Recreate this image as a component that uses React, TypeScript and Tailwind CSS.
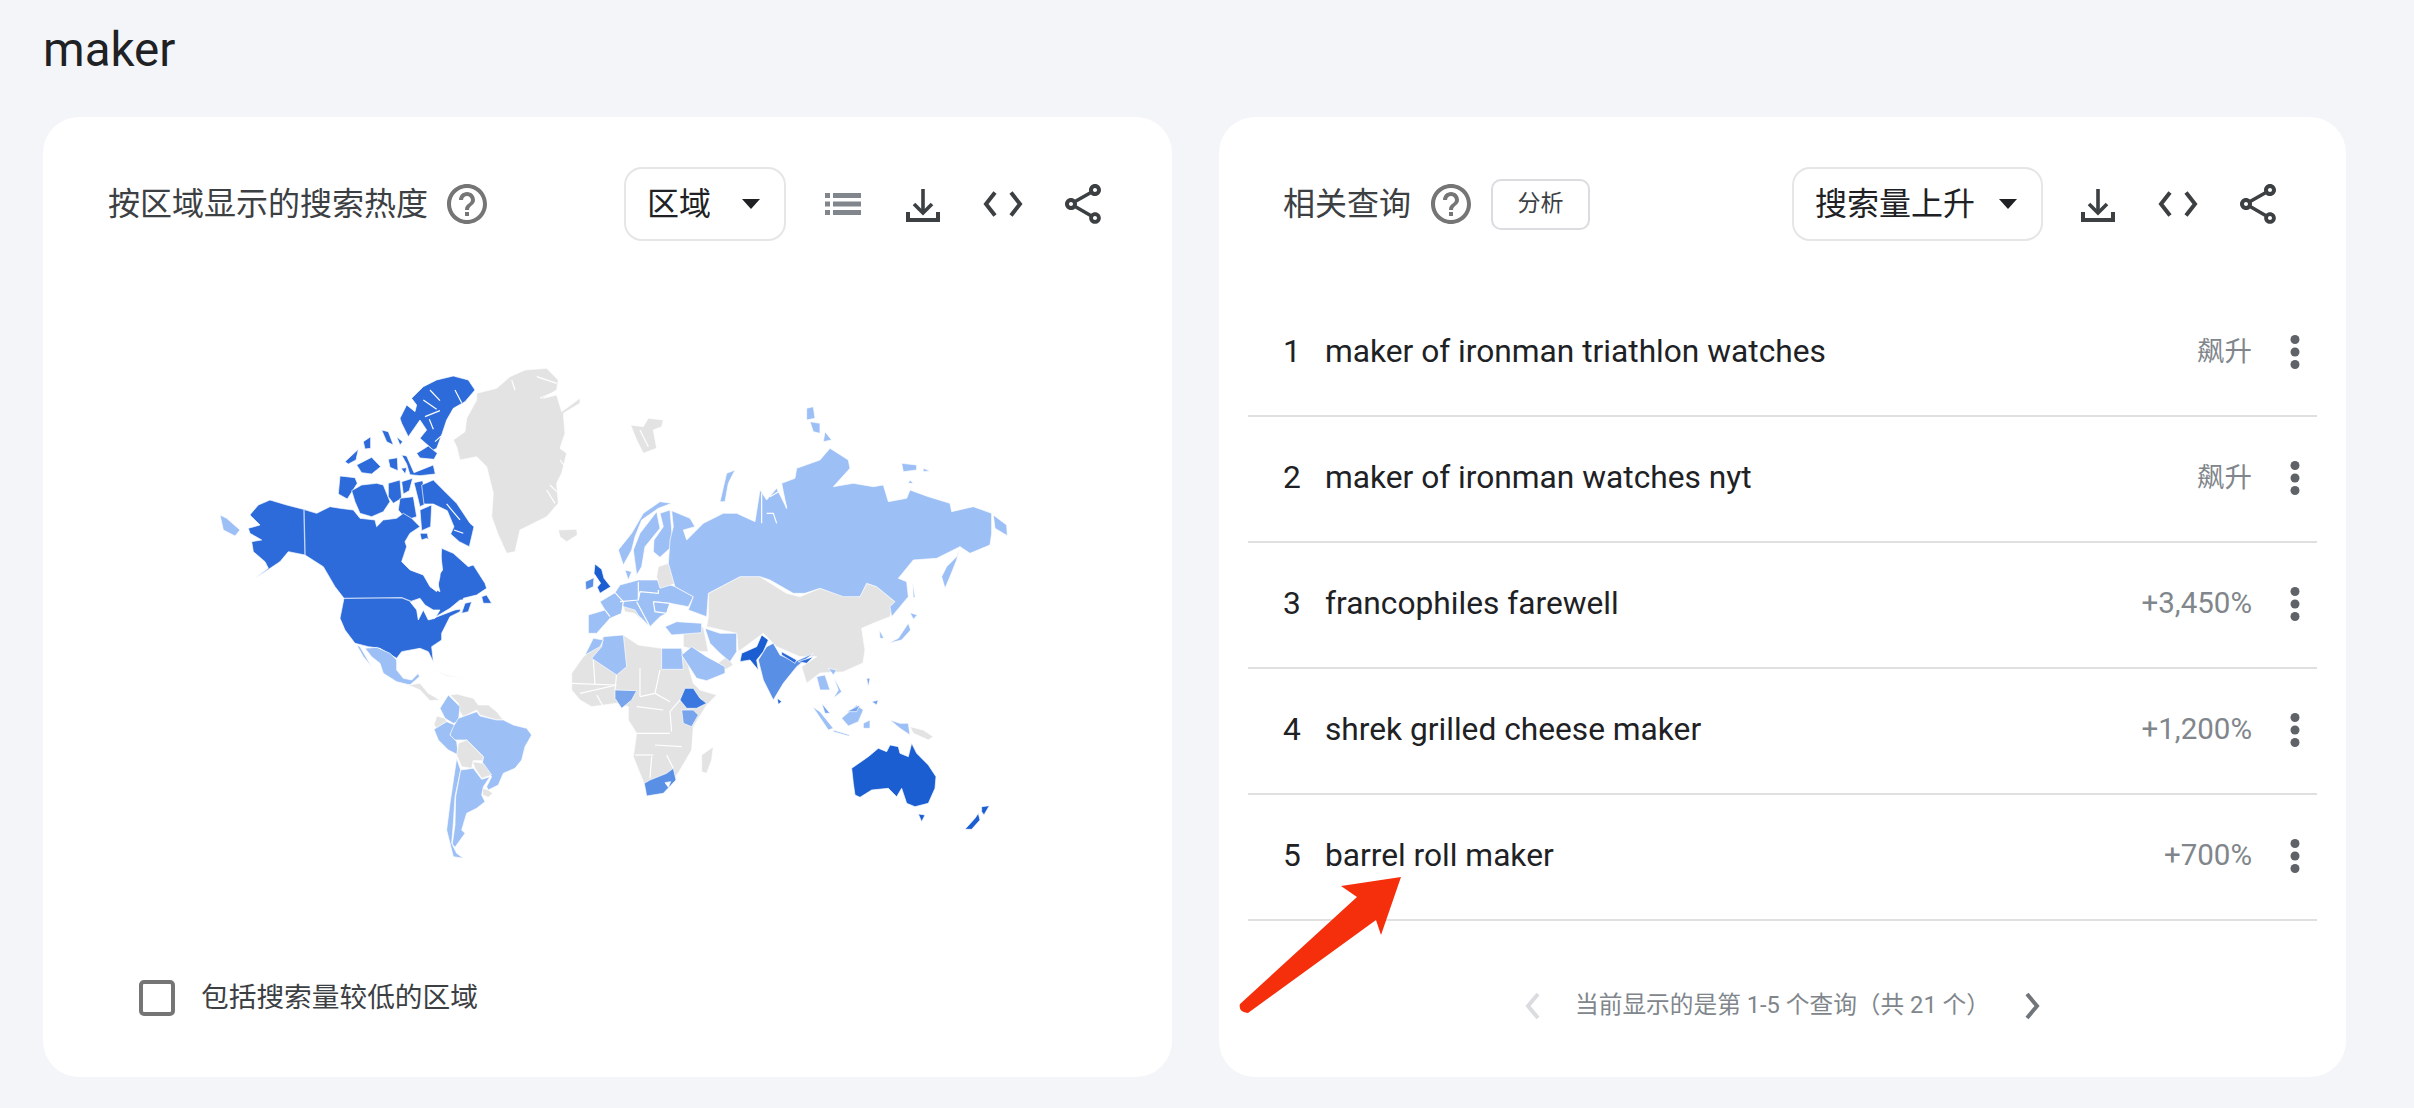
const FONT = "font-['Roboto','Noto_Sans_CJK_SC',sans-serif]"

const DARK = '#2c6bd9'
const DEEP = '#1b5ed2'
const ETHIOPIA = '#3a78df'
const MID = '#5a8fe6'
const SOFT = '#78a4ec'
const LIGHT = '#9cbff5'
const GRAY = '#e3e3e3'
const WHITE = '#ffffff'

type Sheet = {
  x: number
  y: number
  shapes: [string, string][]
  lines?: string[]
}

// each sheet is traced at 3x, x/y is where it sits on the page
const sheets: Sheet[] = [
  {
    x: 440,
    y: 360,
    shapes: [
      [GRAY, '40,240 75,215 80,175 110,120 110,100 170,85 210,50 255,30 320,25 355,60 350,90 310,115 350,105 365,155 420,115 420,130 370,160 375,220 360,265 380,280 365,340 350,370 355,430 320,470 240,510 225,575 200,580 175,525 155,470 160,400 140,320 110,290 60,300 50,260'],
      [GRAY, '355,510 410,508 412,525 380,545 360,530'],
      [GRAY, '572,195 610,200 625,175 670,180 665,200 640,210 650,265 610,280 590,240'],
    ],
    lines: ['290,50 350,70', '215,60 225,90', '300,115 345,95', '320,390 345,430', '360,300 375,320', '330,375 350,395', '600,210 625,260'],
  },
  {
    x: 220,
    y: 370,
    shapes: [
      [DARK, '575,85 610,50 650,30 700,18 745,30 765,60 735,95 700,115 680,150 665,195 650,235 640,240 600,205 620,180 600,150 565,200 545,160 540,145 560,105 585,125 590,105'],
      [DARK, '485,180 505,185 520,225 500,215'],
      [DARK, '530,200 548,215 540,225'],
      [DARK, '375,275 415,238 408,270 385,282'],
      [DARK, '430,215 452,200 452,235 435,237'],
      [DARK, '410,285 455,262 482,290 455,312 425,308'],
      [DARK, '505,268 532,263 534,302 510,292'],
      [DARK, '545,255 560,258 582,308 640,285 646,312 600,317 570,314 560,282'],
      [DARK, '543,295 560,293 556,312'],
      [DARK, '590,250 625,228 652,250 642,268 600,264'],
      [DARK, '360,318 405,323 412,340 382,387 355,372'],
      [DARK, '395,362 425,345 470,340 490,345 510,395 490,425 455,440 420,430 405,395'],
      [DARK, '505,340 540,330 545,385 520,400 505,380'],
      [DARK, '545,335 578,325 568,362 550,372'],
      [DARK, '540,385 580,380 590,440 560,450 535,420'],
      [DARK, '582,338 608,332 620,400 600,410'],
      [DARK, '605,345 640,330 675,365 710,400 750,460 762,470 748,530 718,515 692,492 702,470 682,422 640,402 612,402'],
      [DARK, '600,420 635,405 632,470 605,482'],
      [DARK, '600,490 622,490 627,517 605,512'],
      [DARK, '92,432 115,405 150,390 200,405 250,418 290,430 330,410 360,415 400,420 420,445 465,450 470,470 490,450 530,445 550,430 575,445 600,470 570,490 555,515 560,530 545,575 570,600 610,615 630,650 650,665 660,620 665,535 700,550 745,590 760,585 795,640 800,655 770,675 730,685 720,725 690,740 665,790 665,810 635,830 640,875 625,845 600,835 545,845 530,865 505,850 480,835 445,830 405,820 375,780 360,745 372,685 345,650 310,590 255,555 205,545 180,575 135,605 105,625 145,595 135,575 100,545 95,515 125,510 90,490 85,475 120,465 90,435'],
      [WHITE, '548,575 565,530 590,515 620,505 660,535 668,600 650,625 660,665 640,655 630,620 575,600'],
      [WHITE, '570,695 600,685 615,705 640,720 660,720 645,745 625,750 610,720 595,750 590,720'],
      [WHITE, '640,745 690,715 720,690 745,690 740,715 705,720'],
      [DARK, '785,680 800,675 815,700 790,700'],
      [DARK, '735,700 755,695 745,725 725,730'],
      [LIGHT, '0,435 20,445 60,480 45,498 10,480'],
    ],
    lines: ['610,90 650,118', '630,60 660,92', '615,140 660,122', '628,148 640,178', '705,60 725,98', '645,215 665,197', '680,402 720,450', '702,480 730,490', '300,590 345,670'],
  },
  {
    x: 340,
    y: 640,
    shapes: [
      [LIGHT, '75,25 110,22 150,40 170,60 170,90 190,115 215,120 235,100 238,110 210,135 170,125 130,100 120,70 95,50'],
      [LIGHT, '50,15 60,20 95,80 70,50'],
      [GRAY, '205,135 240,130 265,160 300,180 270,182 240,150'],
      [GRAY, '270,85 320,105 375,115 320,108'],
      [GRAY, '330,165 350,162 400,175 415,195 445,195 470,215 490,240 470,240 420,225 410,210 370,230 360,215 355,190'],
      [LIGHT, '325,165 360,200 355,245 340,250 315,235 300,205'],
      [GRAY, '290,228 315,235 320,245 290,265 282,255'],
      [LIGHT, '282,268 320,245 345,255 330,285 350,305 355,345 325,330 295,300'],
      [LIGHT, '355,235 410,215 420,228 470,240 490,240 520,255 560,265 575,285 555,320 545,360 525,385 490,400 475,435 445,450 440,440 455,410 425,385 430,350 380,300 345,300 330,285 340,260'],
      [GRAY, '355,310 380,300 430,350 428,362 400,362 395,385 365,380 350,345'],
      [GRAY, '398,365 430,370 455,405 425,415 405,385'],
      [GRAY, '428,445 445,450 458,460 445,472 428,465'],
      [LIGHT, '350,355 362,390 345,470 340,550 335,610 350,640 370,655 340,650 320,570 330,490'],
      [LIGHT, '362,390 400,385 425,418 450,410 430,440 425,465 435,485 410,505 380,520 365,570 375,580 345,622 337,612 345,555 347,470'],
    ],
  },
  {
    x: 560,
    y: 640,
    shapes: [
      [GRAY, '70,50 100,25 130,-10 190,-15 235,15 305,25 365,25 380,60 400,130 420,150 470,165 440,195 400,260 395,330 360,390 340,420 310,460 260,468 250,425 220,350 230,280 205,240 205,200 170,190 95,200 60,180 35,150 35,100'],
      [SOFT, '165,150 230,152 215,180 185,205 165,175'],
      [LIGHT, '305,25 365,25 370,88 305,88'],
      [ETHIOPIA, '375,145 400,145 420,175 440,190 410,205 380,205 360,180'],
      [SOFT, '365,210 400,210 415,225 395,260 370,250'],
      [MID, '253,430 270,420 320,400 340,385 348,420 310,460 260,468'],
      [WHITE, '315,428 332,425 325,442'],
      [GRAY, '425,395 425,345 460,320 455,360 440,400'],
    ],
    lines: ['100,60 105,135', '35,130 165,135', '170,100 165,150', '240,85 240,170', '300,90 285,160 330,185', '230,200 310,210', '360,180 330,215 335,275', '220,280 330,280', '225,345 280,345', '285,315 365,320', '275,350 270,415', '320,345 340,385', '285,160 240,170', '60,160 170,135', '110,165 130,200'],
  },
  {
    x: 560,
    y: 470,
    shapes: [
      [GRAY, '445,370 540,320 600,320 680,370 720,380 780,355 850,375 900,380 920,340 950,350 1005,395 990,440 940,460 905,475 915,540 909,579 849,606 780,609 740,640 725,590 770,560 720,560 650,530 610,490 535,545 530,490 440,470 445,440'],
      [GRAY, '370,490 430,470 445,545 425,545 370,530'],
      [GRAY, '420,630 470,620 495,600 520,585 500,560 480,575 440,600'],
      [LIGHT, '130,500 190,495 200,590 170,615 95,565 125,530'],
      [LIGHT, '75,555 100,505 130,510 120,530'],
      [LIGHT, '365,555 395,530 440,560 495,590 495,610 440,632 410,625'],
      [LIGHT, '435,475 480,490 530,490 530,545 510,575 480,550 450,520'],
      [LIGHT, '315,470 350,455 425,460 425,488 335,495'],
      [DEEP, '540,575 545,550 590,530 605,495 625,510 610,545 590,570 595,600 570,570'],
      [MID, '595,570 620,530 640,520 660,555 705,575 760,550 710,590 670,640 640,690 610,630 600,590'],
      [DEEP, '652,685 665,695 655,703'],
      [DARK, '665,545 710,570 705,580 665,555'],
      [DARK, '715,575 760,560 740,580'],
      // mainland europe sits on one base so only thin borders show between countries
      [LIGHT, '120,395 165,368 180,345 235,330 290,330 345,350 400,380 385,410 330,400 320,430 300,440 270,470 240,440 190,410 185,430 150,445 110,490 85,490 85,435 135,420'],
      [DEEP, '105,282 125,298 132,325 152,350 120,370 112,352 122,340 102,310'],
      [MID, '76,335 102,323 100,350 78,360'],
      [LIGHT, '175,240 215,190 250,130 300,95 335,100 295,115 245,150 225,200 215,240 190,285'],
      [LIGHT, '220,240 240,190 290,125 300,175 255,230 245,290 230,315'],
      [LIGHT, '300,130 330,120 335,180 340,225 300,262 280,245 282,210 310,170'],
      [GRAY, '190,410 225,420 250,460 225,430 195,425'],
      [GRAY, '295,290 325,280 350,340 300,355 290,320'],
      [LIGHT, '195,300 215,305 205,330'],
      [LIGHT, '480,95 500,10 525,0 505,40 495,95'],
    ],
    lines: ['180,395 235,390 240,365 295,370 295,360', '165,368 190,395 185,430', '150,440 135,420', '235,335 235,390', '280,395 330,400 320,430 285,425 280,395', '230,395 270,470'],
  },
  {
    x: 760,
    y: 390,
    shapes: [
      [LIGHT, '-265,362 -210,385 -195,410 -230,420 -220,450 -170,400 -110,370 -70,370 -15,395 0,300 20,330 50,295 80,355 65,280 105,265 110,235 180,210 210,175 265,210 270,235 220,290 280,280 340,290 370,285 385,335 440,325 450,300 505,320 570,340 575,365 640,350 695,370 695,430 690,465 630,490 600,470 530,505 460,510 415,565 440,575 445,620 395,680 390,650 405,635 350,590 320,580 300,620 250,620 180,595 135,610 100,610 30,570 0,560 -60,560 -155,610 -160,680 -215,660 -200,620 -255,590 -275,520 -270,450 -260,410'],
      [LIGHT, '140,55 160,50 165,85 140,90'],
      [LIGHT, '150,95 180,100 180,130 160,125'],
      [LIGHT, '195,125 215,150 190,155'],
      [LIGHT, '425,220 470,225 470,240 430,245'],
      [LIGHT, '490,235 510,243 490,245'],
      [LIGHT, '450,270 460,280 445,280'],
      [LIGHT, '700,375 740,405 742,437 705,415'],
      [LIGHT, '600,470 590,510 570,560 555,595 545,560 560,530 590,500'],
      [LIGHT, '458,575 465,620 460,625'],
      [LIGHT, '450,668 472,675 460,688'],
      [LIGHT, '445,700 452,720 425,750 385,760 415,745'],
      [LIGHT, '358,720 372,745 360,745'],
    ],
    lines: ['5,310 5,400', '20,370 40,370 50,400', '30,320 65,300 80,355'],
  },
  {
    x: 800,
    y: 640,
    shapes: [
      [LIGHT, '50,110 75,105 90,150 60,150'],
      [LIGHT, '85,85 110,90 100,105'],
      [LIGHT, '100,110 125,155 100,175 115,150'],
      [LIGHT, '38,200 60,215 100,265 85,270'],
      [SOFT, '65,190 90,220 75,220'],
      [LIGHT, '125,235 170,195 190,210 175,245 145,258'],
      [SOFT, '140,215 180,195 170,215'],
      [LIGHT, '100,270 150,285 145,288 100,275'],
      [LIGHT, '190,250 210,240 210,265 190,265'],
      [SOFT, '200,115 210,115 205,140'],
      [SOFT, '215,185 235,180 230,195'],
      [LIGHT, '270,240 300,250 325,250 330,285 300,265'],
      [GRAY, '330,260 370,270 400,290 385,300 340,280'],
      [DEEP, '155,385 205,350 235,325 260,335 270,315 295,320 300,340 325,350 335,310 350,340 385,375 408,410 405,445 385,490 345,500 320,490 305,445 290,470 265,445 215,450 180,472 165,465 160,430'],
      [DEEP, '355,522 375,525 365,545'],
      [DEEP, '495,568 525,535 535,520 540,540 515,568'],
      [DEEP, '545,500 568,497 552,525 545,515'],
    ],
  },
]

function WorldMap() {
  return (
    <svg viewBox="190 340 860 540" className="block h-[540px] w-[860px]">
      {sheets.map((sheet) => (
        <g key={`${sheet.x}-${sheet.y}`} transform={`translate(${sheet.x} ${sheet.y}) scale(0.3333)`}>
          {sheet.shapes.map(([fill, points]) => (
            <polygon key={points} fill={fill} points={points} stroke="#fff" strokeWidth="2" strokeLinejoin="round" />
          ))}
          {sheet.lines?.map((points) => (
            <polyline key={points} fill="none" stroke="#fff" strokeWidth="3.5" points={points} />
          ))}
        </g>
      ))}
      {/* alaska and 49th parallel borders are paler than the coast */}
      <g transform="translate(220 370) scale(0.3333)" fill="none" stroke="#c3d6f6" strokeWidth="4">
        <path d="M252 420L255 555" />
        <path d="M372 685L545 683L575 695" />
      </g>
    </svg>
  )
}

function Help() {
  return (
    <svg viewBox="0 0 24 24" className="size-12 fill-[#757575]">
      <path d="M11 18h2v-2h-2v2zm1-16C6.48 2 2 6.48 2 12s4.48 10 10 10 10-4.48 10-10S17.52 2 12 2zm0 18c-4.41 0-8-3.59-8-8s3.59-8 8-8 8 3.59 8 8-3.59 8-8 8zm0-14c-2.21 0-4 1.79-4 4h2c0-1.1.9-2 2-2s2 .9 2 2c0 2-3 1.75-3 5h2c0-2.25 3-2.5 3-5 0-2.21-1.79-4-4-4z" />
    </svg>
  )
}

function ListIcon() {
  return (
    <svg viewBox="0 0 48 48" className="size-12 fill-[#80868b]">
      <rect x="6" y="13" width="5" height="5" />
      <rect x="6" y="21.5" width="5" height="5" />
      <rect x="6" y="30" width="5" height="5" />
      <rect x="14" y="13" width="28" height="5" />
      <rect x="14" y="21.5" width="28" height="5" />
      <rect x="14" y="30" width="28" height="5" />
    </svg>
  )
}

function DownloadIcon() {
  return (
    <svg viewBox="0 0 48 48" fill="none" className="size-12 stroke-[#3c4043]" strokeWidth="3.6">
      <path d="M24 9V32" />
      <path d="M15 24l9 9 9-9" />
      <path d="M9 32v8h30v-8" strokeWidth="4" />
    </svg>
  )
}

function CodeIcon() {
  return (
    <svg viewBox="0 0 48 48" fill="none" className="size-12 stroke-[#3c4043]" strokeWidth="4">
      <path d="M16 12.5L7 24l9 11.5" />
      <path d="M32 12.5L41 24l-9 11.5" />
    </svg>
  )
}

function ShareIcon() {
  return (
    <svg viewBox="0 0 24 24" className="size-12 fill-[#3c4043]">
      <path d="M18 16.08c-.76 0-1.44.3-1.96.77L8.91 12.7c.05-.23.09-.46.09-.7s-.04-.47-.09-.7l7.05-4.11c.54.5 1.25.81 2.04.81 1.66 0 3-1.34 3-3s-1.34-3-3-3-3 1.34-3 3c0 .24.04.47.09.7L8.04 9.81C7.5 9.31 6.79 9 6 9c-1.66 0-3 1.34-3 3s1.34 3 3 3c.79 0 1.5-.31 2.04-.81l7.12 4.16c-.05.21-.08.43-.08.65 0 1.61 1.31 2.92 2.92 2.92 1.61 0 2.92-1.31 2.92-2.92s-1.31-2.92-2.92-2.92zM18 4c.55 0 1 .45 1 1s-.45 1-1 1-1-.45-1-1 .45-1 1-1zM6 13c-.55 0-1-.45-1-1s.45-1 1-1 1 .45 1 1-.45 1-1 1zm12 7.02c-.55 0-1-.45-1-1s.45-1 1-1 1 .45 1 1-.45 1-1 1z" />
    </svg>
  )
}

function Kebab() {
  return (
    <svg viewBox="0 0 12 36" className="h-9 w-3 fill-[#5f6368]">
      <circle cx="6" cy="5.5" r="4.5" />
      <circle cx="6" cy="18" r="4.5" />
      <circle cx="6" cy="30.5" r="4.5" />
    </svg>
  )
}

function Select({ label, className }: { label: string; className: string }) {
  return (
    <div className={`flex h-[74px] items-center justify-between rounded-[18px] border-2 border-[#e6e6e6] pl-[21px] pr-[24px] text-[32px] text-[#202124] ${className}`}>
      <span>{label}</span>
      <svg viewBox="0 0 18 10" className="h-2.5 w-[18px] fill-[#202124]">
        <path d="M0 0h18L9 10z" />
      </svg>
    </div>
  )
}

const queries = [
  ['maker of ironman triathlon watches', '飙升', 'text-[27.5px]'],
  ['maker of ironman watches nyt', '飙升', 'text-[27.5px]'],
  ['francophiles farewell', '+3,450%', 'text-[29.5px]'],
  ['shrek grilled cheese maker', '+1,200%', 'text-[29.5px]'],
  ['barrel roll maker', '+700%', 'text-[29.5px]'],
]

export default function App() {
  return (
    <div className={`relative h-[1108px] w-[2414px] overflow-hidden bg-[#f4f5f9] pl-[43px] ${FONT}`}>
      <h1 className="h-[117px] pt-[22px] text-[47.5px] leading-[56px] font-normal text-[#202124]">maker</h1>
      <div className="flex gap-[47px]">
        <section className="flex h-[960px] w-[1129px] flex-col rounded-[36px] bg-white">
          <header className="mt-[50px] flex items-center pl-[65px]">
            <h2 className="w-[335px] text-[32px] font-normal whitespace-nowrap text-[#3c4043]">按区域显示的搜索热度</h2>
            <Help />
            <Select label="区域" className="ml-[133px] w-[162px]" />
            <div className="ml-[33px] flex gap-8">
              <ListIcon />
              <DownloadIcon />
              <CodeIcon />
              <ShareIcon />
            </div>
          </header>
          <div className="mt-[99px] ml-[147px]">
            <WorldMap />
          </div>
          <label className="mt-[97px] ml-[96px] flex items-center gap-[26px] text-[27.7px] text-[#3c4043]">
            <span className="size-9 rounded-[5px] border-4 border-[#757575]" />
            包括搜索量较低的区域
          </label>
        </section>

        <section className="flex h-[960px] w-[1127px] flex-col rounded-[36px] bg-white px-[29px]">
          <header className="mt-[50px] flex items-center pl-[35px]">
            <h2 className="w-[126px] text-[32px] font-normal whitespace-nowrap text-[#3c4043]">相关查询</h2>
            <div className="ml-[18px]">
              <Help />
            </div>
            <button className="ml-4 h-[51px] w-[99px] rounded-[10px] border-2 border-[#dadce0] text-[23px] text-[#3c4043]">分析</button>
            <Select label="搜索量上升" className="ml-[202px] w-[251px]" />
            <div className="ml-[31px] flex gap-8">
              <DownloadIcon />
              <CodeIcon />
              <ShareIcon />
            </div>
          </header>
          <ol className="mt-[50px]">
            {queries.map(([name, value, size], i) => (
              <li key={name} className="flex h-[126px] items-center border-b-2 border-[#e0e0e0] pb-[3px] pl-[35px] text-[31.7px] text-[#202124]">
                <span className="w-[42px]">{i + 1}</span>
                <span className="flex-1">{name}</span>
                <span className={`text-[#80868b] ${size}`}>{value}</span>
                <span className="mr-4 ml-[37px] flex">
                  <Kebab />
                </span>
              </li>
            ))}
          </ol>
          <footer className="mt-[67px] flex items-center justify-center gap-[30px] text-[23.7px] text-[#80868b]">
            <svg viewBox="0 0 24 36" fill="none" className="h-9 w-6 stroke-[#dadce0]" strokeWidth="4">
              <path d="M17 6L7 18l10 12" />
            </svg>
            <span>当前显示的是第 1-5 个查询（共 21 个）</span>
            <svg viewBox="0 0 24 36" fill="none" className="h-9 w-6 stroke-[#70757a]" strokeWidth="4">
              <path d="M7 6l10 12L7 30" />
            </svg>
          </footer>
        </section>
      </div>
      {/* annotation drawn over the screenshot */}
      <svg viewBox="0 0 2414 1108" className="pointer-events-none absolute inset-0 h-[1108px] w-[2414px]">
        <path d="M1401 877L1341 886L1357 897L1240 1004Q1238 1012 1248 1013L1376 920L1381 935Z" fill="#f52e0c" />
      </svg>
    </div>
  )
}
